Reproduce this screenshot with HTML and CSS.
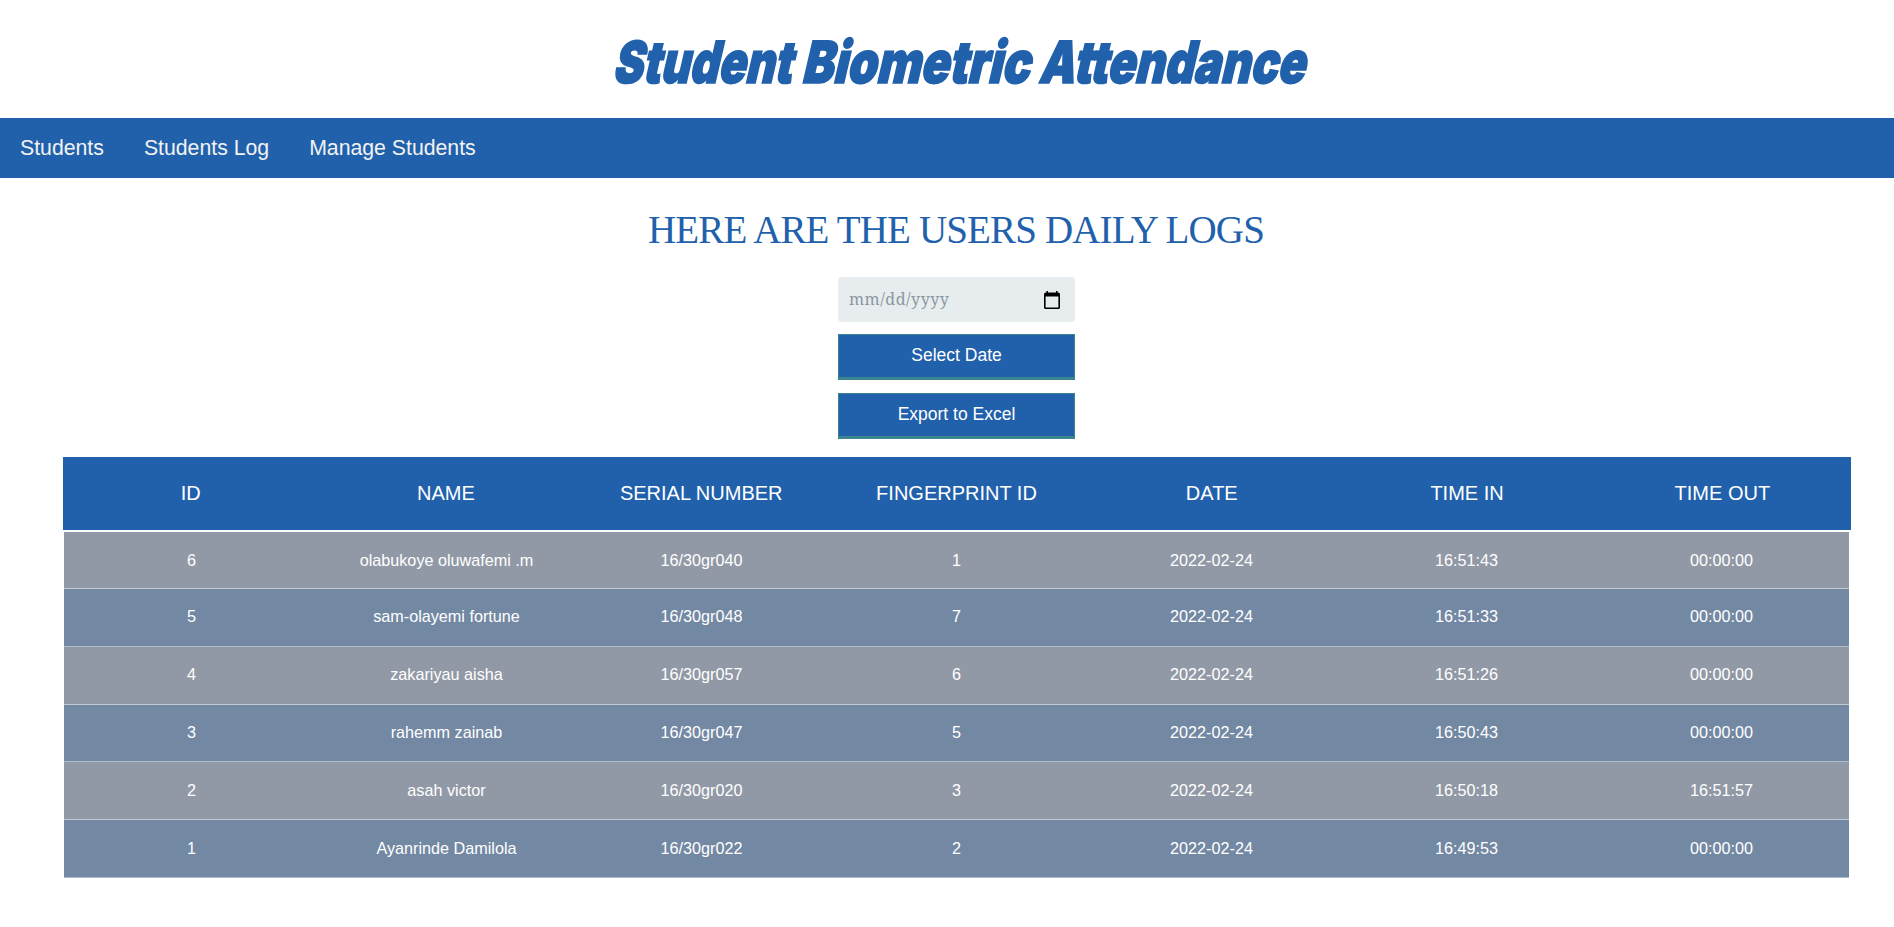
FILE: index.html
```html
<!DOCTYPE html>
<html lang="en">
<head>
<meta charset="utf-8">
<title>Student Biometric Attendance</title>
<link rel="stylesheet" href="styles.css">
</head>
<body>
<header class="header">
  <svg class="brand" width="700" height="60" viewBox="0 0 700 60" role="heading" aria-level="1">
    <text transform="translate(0 51) skewX(-13)" textLength="179" lengthAdjust="spacingAndGlyphs">Student</text>
    <text transform="translate(189 51) skewX(-13)" textLength="228" lengthAdjust="spacingAndGlyphs">Biometric</text>
    <text transform="translate(426 51) skewX(-13)" textLength="266" lengthAdjust="spacingAndGlyphs">Attendance</text>
  </svg>
</header>
<nav class="nav">
  <a class="nav-link">Students</a>
  <a class="nav-link">Students Log</a>
  <a class="nav-link">Manage Students</a>
</nav>
<main class="main">
  <h2 class="heading">HERE ARE THE USERS DAILY LOGS</h2>
  <form class="filters">
    <div class="date"><span class="date-text">mm/dd/yyyy</span>
      <svg class="date-icon" width="16" height="18" viewBox="0 0 16 18"><path fill="#000" fill-rule="evenodd" d="M2.500 0h1.500v1.600h8V0h1.500v1.600h.9A1.600 1.600 0 0 1 16 3.200v13.200a1.600 1.600 0 0 1-1.600 1.600H1.600A1.600 1.600 0 0 1 0 16.400V3.200a1.600 1.600 0 0 1 1.600-1.600h.9zM1.600 5.500v10.900h12.800V5.500z"/></svg>
    </div>
    <button class="btn" type="button">Select Date</button>
    <button class="btn" type="button">Export to Excel</button>
  </form>
  <section class="logs">
    <div class="row head"><span>ID</span><span>NAME</span><span>SERIAL NUMBER</span><span>FINGERPRINT ID</span><span>DATE</span><span>TIME IN</span><span>TIME OUT</span></div>
    <div class="body">
      <div class="row"><span>6</span><span>olabukoye oluwafemi .m</span><span>16/30gr040</span><span>1</span><span>2022-02-24</span><span>16:51:43</span><span>00:00:00</span></div>
      <div class="row"><span>5</span><span>sam-olayemi fortune</span><span>16/30gr048</span><span>7</span><span>2022-02-24</span><span>16:51:33</span><span>00:00:00</span></div>
      <div class="row"><span>4</span><span>zakariyau aisha</span><span>16/30gr057</span><span>6</span><span>2022-02-24</span><span>16:51:26</span><span>00:00:00</span></div>
      <div class="row"><span>3</span><span>rahemm zainab</span><span>16/30gr047</span><span>5</span><span>2022-02-24</span><span>16:50:43</span><span>00:00:00</span></div>
      <div class="row"><span>2</span><span>asah victor</span><span>16/30gr020</span><span>3</span><span>2022-02-24</span><span>16:50:18</span><span>16:51:57</span></div>
      <div class="row"><span>1</span><span>Ayanrinde Damilola</span><span>16/30gr022</span><span>2</span><span>2022-02-24</span><span>16:49:53</span><span>00:00:00</span></div>
    </div>
  </section>
</main>
</body>
</html>
```
FILE: styles.css
```css
* { box-sizing: border-box; }
body { margin: 0; background: #fff; font-family: "Liberation Sans", Arial, sans-serif; }
.header { height: 118px; padding: 32px 0 0 612px; }
.brand { display: block; overflow: visible; }
.brand text { font: 900 58px Inter, Roboto, sans-serif; fill: #2161ac; stroke: #2161ac; stroke-width: 1.7; stroke-linejoin: miter; }
.nav { display: flex; height: 60px; background: #2161ac; }
.nav-link { padding: 0 20px; color: #f2f2f2; font-size: 21.250px; line-height: 60px; }
.main { padding: 0 43px 0 63px; }
.heading { margin: 0; padding: 29px 2px 0 0; height: 99px; text-align: center; font: 400 39px/46px "Liberation Serif", "Times New Roman", serif; letter-spacing: -.85px; color: #2161ac; white-space: nowrap; }
.filters { width: 237px; margin: 0 auto 0 775px; display: grid; row-gap: 12px; grid-template-rows: 45px 46px 47px; }
.date { display: flex; align-items: center; justify-content: space-between; padding: 0 15px 0 11px; background: #e7ecee; border-radius: 4px; }
.date-text { margin-top: -2px; font: 16px "Noto Serif", "DejaVu Serif", serif; letter-spacing: .5px; color: #8a97a0; }
.btn { padding: 0 0 2px; border: 1px solid #39868f; border-bottom-width: 3px; background: #2161ac; color: #fff; font: 17.500px "Liberation Sans", Arial, sans-serif; }
.btn + .btn { margin-top: 1px; }
.logs { margin-top: 18px; }
.row { display: grid; grid-template-columns: repeat(7, 1fr); align-items: center; text-align: center; color: #fff; }
.head { height: 73px; padding-right: 1px; background: #2161ac; font-size: 20px; }
.body { margin: 2px 2px 0 1px; }
.body .row { height: 57.800px; background: #9299a6; border-bottom: 1px solid #c3c8d0; font-size: 16.200px; padding-bottom: 1px; }
.body .row:first-child { height: 57px; padding-bottom: 0; }
.body .row:nth-child(even) { background: #7388a3; border-bottom-color: #afbccb; }
```
